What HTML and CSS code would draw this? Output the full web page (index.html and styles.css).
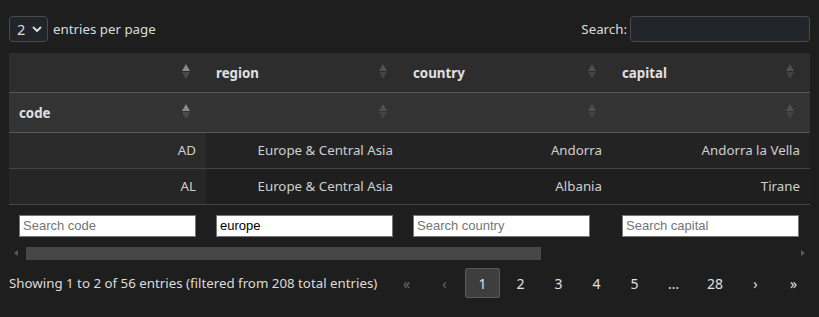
FILE: index.html
```html
<!DOCTYPE html>
<html>
<head>
<meta charset="utf-8">
<link rel="stylesheet" href="styles.css">
</head>
<body>
<div class="wrap">
  <div class="top">
    <div class="len">
      <div class="sel">2 <svg width="10" height="7" viewBox="0 0 10 7"><path d="M1.5 1.5 L5 5 L8.5 1.5" fill="none" stroke="#ddd" stroke-width="1.8" stroke-linecap="round" stroke-linejoin="round"/></svg></div>
      <span>entries per page</span>
    </div>
    <div class="search">
      <span>Search:</span>
      <div class="sbox"></div>
    </div>
  </div>
  <table class="dt">
    <colgroup><col class="c1"><col class="c2"><col class="c3"><col class="c4"></colgroup>
    <thead>
      <tr class="h1">
        <th><span class="sort on"></span></th>
        <th>region<span class="sort"></span></th>
        <th>country<span class="sort"></span></th>
        <th>capital<span class="sort"></span></th>
      </tr>
      <tr class="h2">
        <th>code<span class="sort on"></span></th>
        <th><span class="sort"></span></th>
        <th><span class="sort"></span></th>
        <th><span class="sort"></span></th>
      </tr>
    </thead>
    <tbody>
      <tr class="odd"><td class="sorted">AD</td><td>Europe &amp; Central Asia</td><td>Andorra</td><td>Andorra la Vella</td></tr>
      <tr class="even"><td class="sorted">AL</td><td>Europe &amp; Central Asia</td><td>Albania</td><td>Tirane</td></tr>
    </tbody>
    <tfoot>
      <tr>
        <td><div class="fin ph">Search code</div></td>
        <td><div class="fin">europe</div></td>
        <td><div class="fin ph">Search country</div></td>
        <td><div class="fin ph">Search capital</div></td>
      </tr>
    </tfoot>
  </table>
  <div class="scrollbar">
    <span class="arr left"></span>
    <div class="track"><div class="thumb"></div></div>
    <span class="arr right"></span>
  </div>
  <div class="bottom">
    <div class="info">Showing 1 to 2 of 56 entries (filtered from 208 total entries)</div>
    <div class="pager">
      <span class="pb dis">«</span>
      <span class="pb dis">‹</span>
      <span class="pb cur">1</span>
      <span class="pb">2</span>
      <span class="pb">3</span>
      <span class="pb">4</span>
      <span class="pb">5</span>
      <span class="pb ell">…</span>
      <span class="pb wide">28</span>
      <span class="pb">›</span>
      <span class="pb">»</span>
    </div>
  </div>
</div>
</body>
</html>
```
FILE: styles.css
```css
html, body {
  margin: 0;
  background: #1e1e1e;
}
body {
  font-family: "Noto Sans", "Open Sans", sans-serif;
  font-size: 13.3px;
  color: #dcdcdc;
}
.wrap {
  padding: 16px 9px 0 9px;
}
.top {
  display: flex;
  justify-content: space-between;
  align-items: center;
  height: 26px;
}
.len {
  display: flex;
  align-items: center;
  gap: 5px;
}
.sel {
  box-sizing: border-box;
  width: 39px;
  height: 26px;
  border: 1px solid #4a4a4a;
  border-radius: 4px;
  background: #212529;
  display: flex;
  align-items: center;
  padding-left: 7px;
  gap: 7px;
  font-size: 14.5px;
}
.search {
  display: flex;
  align-items: center;
  gap: 3px;
}
.sbox {
  box-sizing: border-box;
  width: 180px;
  height: 26px;
  border: 1px solid #4a4a4a;
  border-radius: 4px;
  background: #212529;
}
.dt {
  margin-top: 11px;
  width: 801px;
  border-collapse: collapse;
  table-layout: fixed;
}
.c1 { width: 197px; }
.c2 { width: 197px; }
.c3 { width: 209px; }
.c4 { width: 198px; }
.dt th {
  position: relative;
  text-align: left;
  font-weight: 700;
  color: #e0e0e0;
  padding: 1px 10px 0 10px;
  height: 39px;
  box-sizing: border-box;
  border-bottom: 1px solid #575757;
}
.h1 th { background: #2d2d2d; }
.h2 th { background: #333333; height: 40px; }
.sort {
  position: absolute;
  right: 16px;
  top: 50%;
  margin-top: -8px;
  width: 8px;
  height: 15px;
}
.sort::before, .sort::after {
  content: "";
  position: absolute;
  left: 0;
  border-left: 4.5px solid transparent;
  border-right: 4.5px solid transparent;
}
.sort::before {
  top: 0;
  border-bottom: 7px solid #505050;
}
.sort::after {
  top: 8px;
  border-top: 7px solid #424242;
}
.sort.on::before { border-bottom-color: #8a8a8a; }
.sort.on::after { border-top-color: #4a4a4a; }
.dt tbody td {
  text-align: right;
  padding: 0 10px;
  height: 36px;
  box-sizing: border-box;
  color: #cfcfcf;
  border-bottom: 1px solid #444;
}
.odd td { background: #232323; }
.odd td.sorted { background: #2a2a2a; }
.even td { background: #1f1f1f; }
.even td.sorted { background: #262626; }
.dt tfoot td {
  padding: 10px 10px 0 10px;
  vertical-align: top;
  height: 42px;
  box-sizing: border-box;
}
.fin {
  box-sizing: border-box;
  width: 177px;
  height: 22px;
  background: #fff;
  border: 1px solid #767676;
  font-family: "Liberation Sans", Arial, sans-serif;
  font-size: 13px;
  color: #000;
  padding: 2px 3px;
  line-height: 16px;
}
.fin.ph { color: #757575; }
.scrollbar {
  display: flex;
  align-items: center;
  height: 15px;
}
.arr {
  width: 17px;
  height: 15px;
  position: relative;
}
.arr::before {
  content: "";
  position: absolute;
  top: 4px;
  border-top: 3.5px solid transparent;
  border-bottom: 3.5px solid transparent;
}
.arr.left::before { left: 5px; border-right: 4px solid #5a5a5a; }
.arr.right::before { left: 8px; border-left: 4px solid #5a5a5a; }
.track {
  flex: 1;
  height: 13px;
}
.thumb {
  width: 515px;
  height: 13px;
  background: #474747;
}
.bottom {
  display: flex;
  align-items: center;
  justify-content: space-between;
  margin-top: 7px;
  height: 30px;
}
.info {
  color: #dcdcdc;
}
.pager {
  display: flex;
  align-items: center;
  gap: 3px;
  margin-right: -1px;
}
.pb {
  box-sizing: border-box;
  min-width: 35px;
  height: 30px;
  padding: 0 8px;
  display: flex;
  align-items: center;
  justify-content: center;
  border: 1px solid transparent;
  border-radius: 2px;
  color: #e0e0e0;
  font-size: 14px;
}
.pb.wide { min-width: 40px; }
.pb.ell { min-width: 37px; }
.pb.dis { color: #6a6a6a; }
.pb.cur {
  background: #3e3e3e;
  border-color: #5a5a5a;
}
```
